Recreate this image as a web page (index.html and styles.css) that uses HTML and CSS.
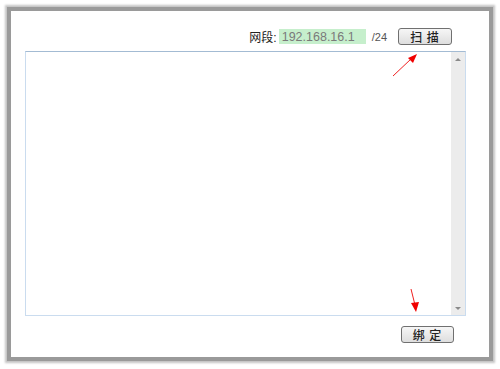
FILE: index.html
```html
<!DOCTYPE html>
<html lang="zh">
<head>
  <meta charset="UTF-8" />
  <title>扫描绑定</title>
  <link rel="stylesheet" href="styles.css">
</head>
<body>

  <div class="frame">
    <div class="toolbar">
      <span class="label">网段:</span>
      <input class="subnet" type="text" value="192.168.16.1" />
      <span class="mask">/24</span>
      <button class="btn">扫 描</button>
    </div>

    <div class="list">
      <div class="list-body"></div>
      <div class="scrollbar">
        <span class="arrow up"></span>
        <span class="arrow down"></span>
      </div>
    </div>

    <div class="footer">
      <button class="btn">绑 定</button>
    </div>
  </div>

  <!-- annotation arrows -->
  <svg class="marks" width="500" height="369" viewBox="0 0 500 369">
    <line x1="393" y1="76" x2="411" y2="59" stroke="#f02020" stroke-width="1" />
    <polygon points="417,54 408,58 413,63" fill="#f00000" />
    <line x1="411" y1="289" x2="415" y2="305" stroke="#f02020" stroke-width="1" />
    <polygon points="416,312 411,303 419,302" fill="#f00000" />
  </svg>

</body>
</html>
```

FILE: styles.css
```css
body {
  margin: 0;
  background: #fff;
  font-family: "Liberation Sans", "Noto Sans CJK SC", Arial, sans-serif;
  font-size: 12px;
  color: #333;
}
.frame {
  position: relative;
  margin: 7px;
  width: 478px;
  height: 346px;
  border: 4px solid #9a9a9a;
  box-shadow: 0 0 2px 2px #c4c4c4;
  background: #fff;
}
.toolbar {
  display: flex;
  align-items: center;
  justify-content: flex-end;
  height: 17px;
  padding: 17px 37px 0 0;
}
.label {
  margin-right: 2px;
  color: #222;
}
.subnet {
  box-sizing: border-box;
  width: 87px;
  height: 15px;
  padding: 0 3px;
  border: none;
  background: #c6efcc;
  color: #7a7a7a;
  font-family: "Liberation Sans", Arial, sans-serif;
  font-size: 12.5px;
}
.mask {
  margin-left: 6px;
  margin-right: 11px;
  color: #555;
  font-size: 11px;
}
.btn {
  box-sizing: border-box;
  width: 54px;
  height: 17px;
  padding: 0;
  border: 1px solid #707070;
  border-radius: 3px;
  background: linear-gradient(#f6f6f6, #dedede);
  color: #222;
  font-family: "Noto Sans CJK SC", sans-serif;
  font-size: 12px;
  font-weight: 500;
  letter-spacing: 1px;
  line-height: 14px;
}
.list {
  display: flex;
  margin: 6px 0 0 14px;
  width: 441px;
  height: 265px;
  box-sizing: border-box;
  border: 1px solid #cadcef;
  border-top-color: #a3bbd3;
}
.list-body {
  flex: 1;
}
.scrollbar {
  position: relative;
  width: 14px;
  background: #ececec;
}
.arrow {
  position: absolute;
  left: 4px;
  width: 0;
  height: 0;
  border-left: 3px solid transparent;
  border-right: 3px solid transparent;
}
.arrow.up {
  top: 6px;
  border-bottom: 3px solid #8a8a8a;
}
.arrow.down {
  bottom: 5px;
  border-top: 3px solid #8a8a8a;
}
.footer {
  display: flex;
  justify-content: flex-end;
  padding: 10px 35px 0 0;
}
.footer .btn {
  width: 53px;
}
.marks {
  position: absolute;
  top: 0;
  left: 0;
  pointer-events: none;
}
```
